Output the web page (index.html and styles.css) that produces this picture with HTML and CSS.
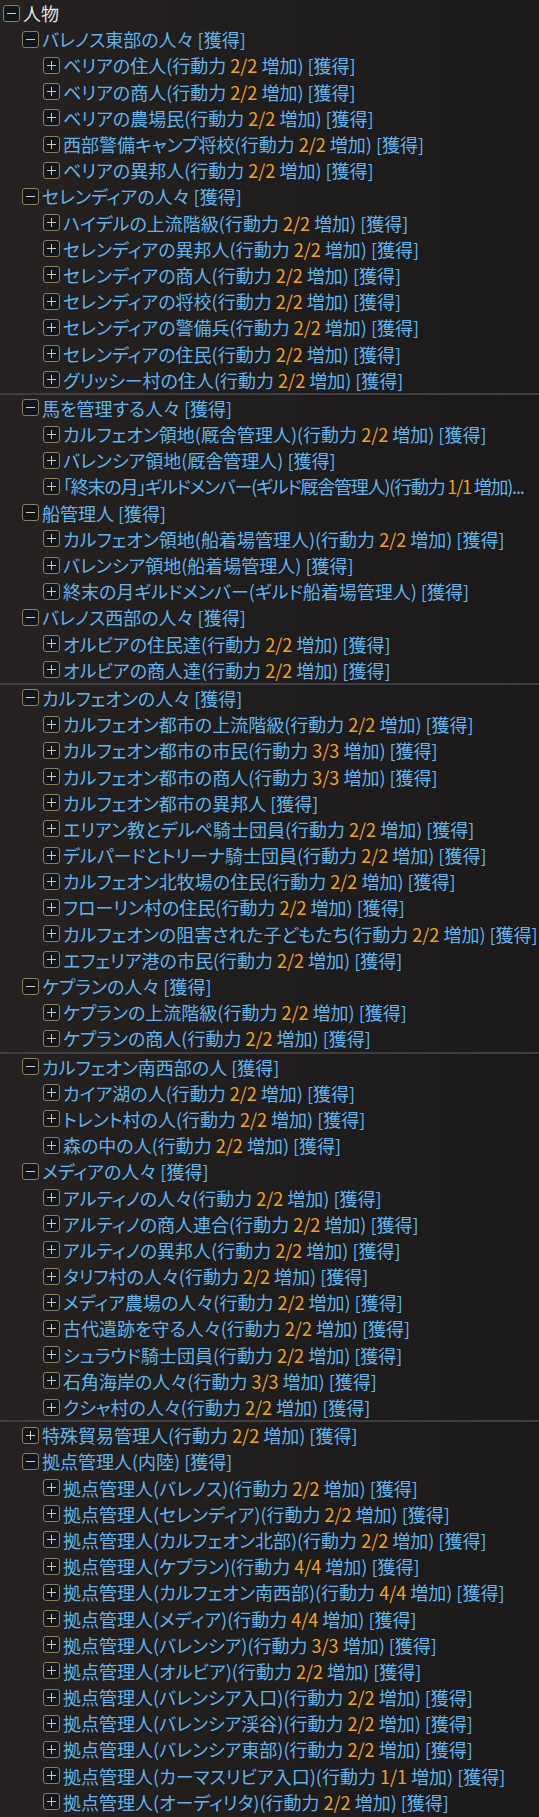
FILE: index.html
```html
<!DOCTYPE html>
<html lang="ja">
<head>
  <meta charset="UTF-8" />
  <meta name="viewport" content="width=device-width, initial-scale=1.0"/>
  <title>人物</title>
  <link rel="stylesheet" href="styles.css">
</head>
<body>

  <div class="tree">

    <!-- バレノス東部 / セレンディア -->
    <div class="section">
      <div class="row lv0"><span class="tg minus"></span><span class="label root">人物</span></div>
      <div class="row lv1"><span class="tg minus"></span><span class="label">バレノス東部の人々 [獲得]</span></div>
      <div class="row lv2"><span class="tg plus"></span><span class="label">ベリアの住人(行動力 <span class="num">2/2</span> 増加) [獲得]</span></div>
      <div class="row lv2"><span class="tg plus"></span><span class="label">ベリアの商人(行動力 <span class="num">2/2</span> 増加) [獲得]</span></div>
      <div class="row lv2"><span class="tg plus"></span><span class="label">ベリアの農場民(行動力 <span class="num">2/2</span> 増加) [獲得]</span></div>
      <div class="row lv2"><span class="tg plus"></span><span class="label">西部警備キャンプ将校(行動力 <span class="num">2/2</span> 増加) [獲得]</span></div>
      <div class="row lv2"><span class="tg plus"></span><span class="label">ベリアの異邦人(行動力 <span class="num">2/2</span> 増加) [獲得]</span></div>
      <div class="row lv1"><span class="tg minus"></span><span class="label">セレンディアの人々 [獲得]</span></div>
      <div class="row lv2"><span class="tg plus"></span><span class="label">ハイデルの上流階級(行動力 <span class="num">2/2</span> 増加) [獲得]</span></div>
      <div class="row lv2"><span class="tg plus"></span><span class="label">セレンディアの異邦人(行動力 <span class="num">2/2</span> 増加) [獲得]</span></div>
      <div class="row lv2"><span class="tg plus"></span><span class="label">セレンディアの商人(行動力 <span class="num">2/2</span> 増加) [獲得]</span></div>
      <div class="row lv2"><span class="tg plus"></span><span class="label">セレンディアの将校(行動力 <span class="num">2/2</span> 増加) [獲得]</span></div>
      <div class="row lv2"><span class="tg plus"></span><span class="label">セレンディアの警備兵(行動力 <span class="num">2/2</span> 増加) [獲得]</span></div>
      <div class="row lv2"><span class="tg plus"></span><span class="label">セレンディアの住民(行動力 <span class="num">2/2</span> 増加) [獲得]</span></div>
      <div class="row lv2"><span class="tg plus"></span><span class="label">グリッシー村の住人(行動力 <span class="num">2/2</span> 増加) [獲得]</span></div>
    </div>

    <!-- 馬 / 船 / バレノス西部 -->
    <div class="section">
      <div class="row lv1"><span class="tg minus"></span><span class="label">馬を管理する人々 [獲得]</span></div>
      <div class="row lv2"><span class="tg plus"></span><span class="label">カルフェオン領地(厩舎管理人)(行動力 <span class="num">2/2</span> 増加) [獲得]</span></div>
      <div class="row lv2"><span class="tg plus"></span><span class="label">バレンシア領地(厩舎管理人) [獲得]</span></div>
      <div class="row lv2"><span class="tg plus"></span><span class="label tight">「終末の月」ギルドメンバー(ギルド厩舎管理人)(行動力 <span class="num">1/1</span> 増加)...</span></div>
      <div class="row lv1"><span class="tg minus"></span><span class="label">船管理人 [獲得]</span></div>
      <div class="row lv2"><span class="tg plus"></span><span class="label">カルフェオン領地(船着場管理人)(行動力 <span class="num">2/2</span> 増加) [獲得]</span></div>
      <div class="row lv2"><span class="tg plus"></span><span class="label">バレンシア領地(船着場管理人) [獲得]</span></div>
      <div class="row lv2"><span class="tg plus"></span><span class="label">終末の月ギルドメンバー(ギルド船着場管理人) [獲得]</span></div>
      <div class="row lv1"><span class="tg minus"></span><span class="label">バレノス西部の人々 [獲得]</span></div>
      <div class="row lv2"><span class="tg plus"></span><span class="label">オルビアの住民達(行動力 <span class="num">2/2</span> 増加) [獲得]</span></div>
      <div class="row lv2"><span class="tg plus"></span><span class="label">オルビアの商人達(行動力 <span class="num">2/2</span> 増加) [獲得]</span></div>
    </div>

    <!-- カルフェオン / ケプラン -->
    <div class="section">
      <div class="row lv1"><span class="tg minus"></span><span class="label">カルフェオンの人々 [獲得]</span></div>
      <div class="row lv2"><span class="tg plus"></span><span class="label">カルフェオン都市の上流階級(行動力 <span class="num">2/2</span> 増加) [獲得]</span></div>
      <div class="row lv2"><span class="tg plus"></span><span class="label">カルフェオン都市の市民(行動力 <span class="num">3/3</span> 増加) [獲得]</span></div>
      <div class="row lv2"><span class="tg plus"></span><span class="label">カルフェオン都市の商人(行動力 <span class="num">3/3</span> 増加) [獲得]</span></div>
      <div class="row lv2"><span class="tg plus"></span><span class="label">カルフェオン都市の異邦人 [獲得]</span></div>
      <div class="row lv2"><span class="tg plus"></span><span class="label">エリアン教とデルペ騎士団員(行動力 <span class="num">2/2</span> 増加) [獲得]</span></div>
      <div class="row lv2"><span class="tg plus"></span><span class="label">デルパードとトリーナ騎士団員(行動力 <span class="num">2/2</span> 増加) [獲得]</span></div>
      <div class="row lv2"><span class="tg plus"></span><span class="label">カルフェオン北牧場の住民(行動力 <span class="num">2/2</span> 増加) [獲得]</span></div>
      <div class="row lv2"><span class="tg plus"></span><span class="label">フローリン村の住民(行動力 <span class="num">2/2</span> 増加) [獲得]</span></div>
      <div class="row lv2"><span class="tg plus"></span><span class="label">カルフェオンの阻害された子どもたち(行動力 <span class="num">2/2</span> 増加) [獲得]</span></div>
      <div class="row lv2"><span class="tg plus"></span><span class="label">エフェリア港の市民(行動力 <span class="num">2/2</span> 増加) [獲得]</span></div>
      <div class="row lv1"><span class="tg minus"></span><span class="label">ケプランの人々 [獲得]</span></div>
      <div class="row lv2"><span class="tg plus"></span><span class="label">ケプランの上流階級(行動力 <span class="num">2/2</span> 増加) [獲得]</span></div>
      <div class="row lv2"><span class="tg plus"></span><span class="label">ケプランの商人(行動力 <span class="num">2/2</span> 増加) [獲得]</span></div>
    </div>

    <!-- カルフェオン南西部 / メディア -->
    <div class="section">
      <div class="row lv1"><span class="tg minus"></span><span class="label">カルフェオン南西部の人 [獲得]</span></div>
      <div class="row lv2"><span class="tg plus"></span><span class="label">カイア湖の人(行動力 <span class="num">2/2</span> 増加) [獲得]</span></div>
      <div class="row lv2"><span class="tg plus"></span><span class="label">トレント村の人(行動力 <span class="num">2/2</span> 増加) [獲得]</span></div>
      <div class="row lv2"><span class="tg plus"></span><span class="label">森の中の人(行動力 <span class="num">2/2</span> 増加) [獲得]</span></div>
      <div class="row lv1"><span class="tg minus"></span><span class="label">メディアの人々 [獲得]</span></div>
      <div class="row lv2"><span class="tg plus"></span><span class="label">アルティノの人々(行動力 <span class="num">2/2</span> 増加) [獲得]</span></div>
      <div class="row lv2"><span class="tg plus"></span><span class="label">アルティノの商人連合(行動力 <span class="num">2/2</span> 増加) [獲得]</span></div>
      <div class="row lv2"><span class="tg plus"></span><span class="label">アルティノの異邦人(行動力 <span class="num">2/2</span> 増加) [獲得]</span></div>
      <div class="row lv2"><span class="tg plus"></span><span class="label">タリフ村の人々(行動力 <span class="num">2/2</span> 増加) [獲得]</span></div>
      <div class="row lv2"><span class="tg plus"></span><span class="label">メディア農場の人々(行動力 <span class="num">2/2</span> 増加) [獲得]</span></div>
      <div class="row lv2"><span class="tg plus"></span><span class="label">古代遺跡を守る人々(行動力 <span class="num">2/2</span> 増加) [獲得]</span></div>
      <div class="row lv2"><span class="tg plus"></span><span class="label">シュラウド騎士団員(行動力 <span class="num">2/2</span> 増加) [獲得]</span></div>
      <div class="row lv2"><span class="tg plus"></span><span class="label">石角海岸の人々(行動力 <span class="num">3/3</span> 増加) [獲得]</span></div>
      <div class="row lv2"><span class="tg plus"></span><span class="label">クシャ村の人々(行動力 <span class="num">2/2</span> 増加) [獲得]</span></div>
    </div>

    <!-- 特殊貿易 / 拠点管理人 -->
    <div class="section">
      <div class="row lv1"><span class="tg plus"></span><span class="label">特殊貿易管理人(行動力 <span class="num">2/2</span> 増加) [獲得]</span></div>
      <div class="row lv1"><span class="tg minus"></span><span class="label">拠点管理人(内陸) [獲得]</span></div>
      <div class="row lv2"><span class="tg plus"></span><span class="label">拠点管理人(バレノス)(行動力 <span class="num">2/2</span> 増加) [獲得]</span></div>
      <div class="row lv2"><span class="tg plus"></span><span class="label">拠点管理人(セレンディア)(行動力 <span class="num">2/2</span> 増加) [獲得]</span></div>
      <div class="row lv2"><span class="tg plus"></span><span class="label">拠点管理人(カルフェオン北部)(行動力 <span class="num">2/2</span> 増加) [獲得]</span></div>
      <div class="row lv2"><span class="tg plus"></span><span class="label">拠点管理人(ケプラン)(行動力 <span class="num">4/4</span> 増加) [獲得]</span></div>
      <div class="row lv2"><span class="tg plus"></span><span class="label">拠点管理人(カルフェオン南西部)(行動力 <span class="num">4/4</span> 増加) [獲得]</span></div>
      <div class="row lv2"><span class="tg plus"></span><span class="label">拠点管理人(メディア)(行動力 <span class="num">4/4</span> 増加) [獲得]</span></div>
      <div class="row lv2"><span class="tg plus"></span><span class="label">拠点管理人(バレンシア)(行動力 <span class="num">3/3</span> 増加) [獲得]</span></div>
      <div class="row lv2"><span class="tg plus"></span><span class="label">拠点管理人(オルビア)(行動力 <span class="num">2/2</span> 増加) [獲得]</span></div>
      <div class="row lv2"><span class="tg plus"></span><span class="label">拠点管理人(バレンシア入口)(行動力 <span class="num">2/2</span> 増加) [獲得]</span></div>
      <div class="row lv2"><span class="tg plus"></span><span class="label">拠点管理人(バレンシア渓谷)(行動力 <span class="num">2/2</span> 増加) [獲得]</span></div>
      <div class="row lv2"><span class="tg plus"></span><span class="label">拠点管理人(バレンシア東部)(行動力 <span class="num">2/2</span> 増加) [獲得]</span></div>
      <div class="row lv2"><span class="tg plus"></span><span class="label">拠点管理人(カーマスリビア入口)(行動力 <span class="num">1/1</span> 増加) [獲得]</span></div>
      <div class="row lv2"><span class="tg plus"></span><span class="label">拠点管理人(オーディリタ)(行動力 <span class="num">2/2</span> 増加) [獲得]</span></div>
    </div>

  </div>
</body>
</html>
```

FILE: styles.css
```css
/* Сброс */
* {
  margin: 0;
  padding: 0;
  box-sizing: border-box;
}

body {
  background: linear-gradient(to right, #252120, #1e1c1c 60%, #1b1919);
  font-family: "Noto Sans CJK JP", "Noto Sans", sans-serif;
  font-size: 18px;
  font-feature-settings: "palt";
  color: #5fb4ec;
  overflow: hidden;
}

/* Дерево */
.tree {
  display: flex;
  flex-direction: column;
}

/* Разделитель между частями списка */
.section + .section {
  border-top: 2px solid #3d3c40;
}

.row {
  display: flex;
  align-items: center;
  height: 26.2px;
  white-space: nowrap;
  overflow: hidden;
}

.lv0 { padding-left: 3px; }
.lv1 { padding-left: 22px; }
.lv2 { padding-left: 43px; }

.label {
  line-height: 1;
}

/* Длинная строка, обрезанная многоточием */
.label.tight {
  letter-spacing: -1.2px;
}

.root {
  color: #e4e2e0;
}

.num {
  color: #efa31b;
}

/* Кнопка плюс / минус */
.tg {
  position: relative;
  flex: none;
  width: 17px;
  height: 17px;
  margin-right: 3px;
  border: 1px solid #8a7e5d;
  border-radius: 3px;
  background-color: #12161b;
}

.tg::before {
  content: "";
  position: absolute;
  left: 3px;
  right: 3px;
  top: 7px;
  height: 1px;
  background-color: #d2cab2;
}

.tg.plus::after {
  content: "";
  position: absolute;
  top: 3px;
  bottom: 3px;
  left: 7px;
  width: 1px;
  background-color: #d2cab2;
}
```
